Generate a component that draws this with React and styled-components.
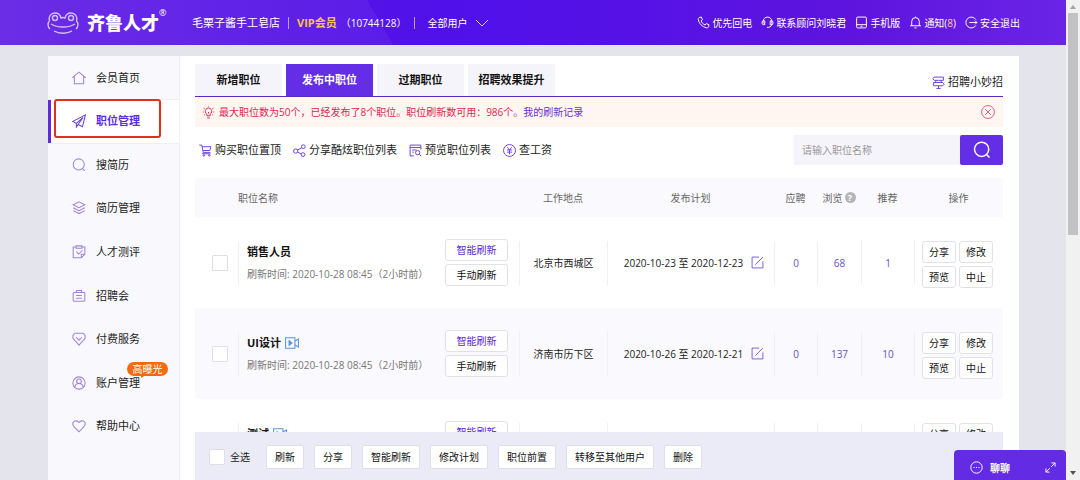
import styled, { createGlobalStyle, css } from 'styled-components';

const GlobalStyle = createGlobalStyle`
  * {
    box-sizing: border-box;
  }

  body {
    margin: 0;
    font-family: 'Open Sans', 'Noto Sans CJK SC', sans-serif;
    font-size: 10px;
    line-height: 16px;
    color: #222;
    background: #e4e5ec;
  }

  button, input, select {
    font-family: inherit;
    font-size: inherit;
    line-height: inherit;
  }

  a {
    color: inherit;
    text-decoration: none;
  }
`;

const icons = {
  phone: <path d="M5 2.5 8 2l2 5-2.5 2c1.200 3.500 4 6.300 7.500 7.500l2-2.500 5 2-.5 3.500c-.3 1.800-2 2.700-3.800 2.300C9.500 20 3.500 14 2.500 6.500 2.200 4.500 3.300 2.900 5 2.500Z" />,
  headset: (
    <>
      <path d="M4 14V10a8 8 0 0 1 16 0v4c0 4-2 6-6 7" />
      <path d="M7 9v7H4.500A2.500 2.500 0 0 1 2 13.500v-2A2.500 2.500 0 0 1 4.500 9ZM17 9v7h2.500a2.500 2.500 0 0 0 2.500-2.500v-2A2.500 2.500 0 0 0 19.500 9Z" />
      <path d="M11 21h3" />
    </>
  ),
  mobile: (
    <>
      <rect x="3" y="2" width="18" height="20" rx="2" />
      <path d="M3 16h18M10 19h4" />
    </>
  ),
  bell: <path d="M5 18V10a7 7 0 0 1 14 0v8M2 18h20M10 22h4M12 1v2" />,
  logout: (
    <>
      <path d="M20 6.500a10 10 0 1 0 0 11" />
      <path d="M8 12h14M18.500 8.500 22 12l-3.500 3.500" />
    </>
  ),
  home: <path d="M12 2 1.500 10.500H4V22h16V10.500h2.500Z" />,
  plane: (
    <>
      <path d="M23 1.500 1.500 12.500l6 3.500L19 6l-8.500 12 7.500 4Z" />
      <path d="M7.500 16v6.500l3-4.500" />
    </>
  ),
  search: (
    <>
      <circle cx="11.500" cy="11" r="9.500" />
      <path d="m18 18 4 4" />
    </>
  ),
  layers: (
    <>
      <path d="m12 1.500 10 5-10 5-10-5Z" />
      <path d="m2 11.500 10 5 10-5M2 16.500l10 5 10-5" />
    </>
  ),
  review: (
    <>
      <path d="M7 3.500H2V22h14l6-6V3.500h-5M22 16h-6v6" />
      <path d="M7 1.500h10v4H7ZM7.500 11.500l4 4L18 9" />
    </>
  ),
  fair: (
    <>
      <rect x="2" y="6" width="20" height="15" rx="1.500" />
      <path d="M7 6l1-3.500h8L17 6M7 11h10M7 16h10" />
    </>
  ),
  gem: (
    <>
      <path d="M5 2h14l3.500 4v5L12 22.500 1.500 11V6Z" />
      <path d="m7 9 5 5 5-5" />
    </>
  ),
  account: (
    <>
      <circle cx="12" cy="12" r="10.500" />
      <circle cx="12" cy="9" r="4" />
      <path d="M5 19c.5-4 3-6 7-6s6.500 2 7 6" />
    </>
  ),
  heart: <path d="M12 22 3 12.500C1 10 1 6.500 3 4.500s6-2 9 1.500c3-3.500 7-3.500 9-1.500s2 5.500 0 8Z" />,
  signpost: <path d="M4 2h17v6H4L1.500 5ZM7 8v4M17 8v4M3 12h17l2.500 3L20 18H3ZM12 18v5M8 23h8" />,
  bulb: (
    <>
      <path d="M9 18v-3a6 6 0 1 1 6 0v3ZM9.500 22h5M12 14v-3" />
      <path d="M12 1v1M3 4l2 1.500M21 4l-2 1.500M1.500 11H3M21 11h1.500M3.500 17l1.500-1M20.500 17 19 16" />
    </>
  ),
  close: (
    <>
      <circle cx="12" cy="12" r="11" />
      <path d="m7 7 10 10M17 7 7 17" />
    </>
  ),
  cart: (
    <>
      <path d="M.5 2H5l3 13.500h13M5.500 5H22l-2 7H7.500M8 15.500 6.500 18H21" />
      <circle cx="9" cy="21" r="1.500" />
      <circle cx="19" cy="21" r="1.500" />
    </>
  ),
  share: (
    <>
      <circle cx="5" cy="13" r="4" />
      <circle cx="19" cy="5" r="3.500" />
      <circle cx="18.500" cy="19.500" r="3.500" />
      <path d="m8.500 11 7.500-4M8.500 15l7 3.500" />
    </>
  ),
  preview: (
    <>
      <path d="M9 22H2V2h20v8M2 6.500h20M6 11h8M6 15h3" />
      <circle cx="16" cy="16" r="4" />
      <path d="m19 19 3.500 3.500" />
    </>
  ),
  yen: (
    <>
      <circle cx="12" cy="12" r="11" />
      <path d="m8 6 4 5 4-5M12 11v8M7.500 11h9M7.500 15h9" />
    </>
  ),
  edit: <path d="M15 2H2v20h20V10M22 2 8 16" />,
  video: (
    <>
      <path d="M1 3h16v18H1ZM17 9l6-4v14l-6-4" />
      <path d="m7 8 5 4-5 4Z" fill="currentColor" />
    </>
  ),
  chat: (
    <>
      <circle cx="12" cy="12" r="10.500" />
      <path d="M6.500 12h2M11 12h2M15.500 12h2" />
    </>
  ),
  expand: <path d="M14 2h8v8M22 2l-8.500 8.500M10 22H2v-8M2 22l8.500-8.500" />,
};

const Svg = styled.svg`
  flex: none;
  display: block;
  width: ${({ $size }) => $size}px;
  height: ${({ $size }) => $size}px;
  fill: none;
  stroke: currentColor;
  stroke-width: ${({ $weight }) => $weight};
  color: ${({ $color }) => $color};
`;

const Icon = ({ name, size = 13, color = 'currentColor', weight = 1.8 }) => (
  <Svg viewBox="0 0 24 24" $size={size} $color={color} $weight={weight} aria-hidden="true">
    {icons[name]}
  </Svg>
);

const menu = [
  { icon: 'home', label: '会员首页' },
  { icon: 'plane', label: '职位管理', active: true },
  { icon: 'search', label: '搜简历' },
  { icon: 'layers', label: '简历管理' },
  { icon: 'review', label: '人才测评' },
  { icon: 'fair', label: '招聘会' },
  { icon: 'gem', label: '付费服务' },
  { icon: 'account', label: '账户管理', badge: '高曝光' },
  { icon: 'heart', label: '帮助中心' },
];

const tabs = ['新增职位', '发布中职位', '过期职位', '招聘效果提升'];

const tools = [
  { icon: 'cart', label: '购买职位置顶' },
  { icon: 'share', label: '分享酷炫职位列表' },
  { icon: 'preview', label: '预览职位列表' },
  { icon: 'yen', label: '查工资' },
];

const jobs = [
  {
    title: '销售人员',
    refreshed: '2020-10-28 08:45（2小时前）',
    place: '北京市西城区',
    plan: '2020-10-23 至 2020-12-23',
    stats: [0, 68, 1],
    refresh: ['智能刷新', '手动刷新'],
    actions: ['分享', '修改', '预览', '中止'],
  },
  {
    title: 'UI设计',
    video: true,
    refreshed: '2020-10-28 08:45（2小时前）',
    place: '济南市历下区',
    plan: '2020-10-26 至 2020-12-21',
    stats: [0, 137, 10],
    refresh: ['智能刷新', '手动刷新'],
    actions: ['分享', '修改', '预览', '中止'],
  },
  {
    title: '测试',
    video: true,
    stats: [null, null, null],
    refresh: ['智能刷新'],
    actions: ['分享', '修改'],
  },
];

const bulkActions = ['刷新', '分享', '智能刷新', '修改计划', '职位前置', '转移至其他用户', '删除'];

const TopBar = () => (
  <Header>
    <Logo href="#">
      <Frog viewBox="0 0 32 22" aria-hidden="true">
        <path d="M2.500 9C1 4.500 4 1 8 1s5.500 2.500 6 5c1-.5 3-.5 4 0 .5-2.500 2-5 6-5s7 3.500 5.500 8" />
        <circle cx="8" cy="6" r="2.500" />
        <circle cx="24" cy="6" r="2.500" />
        <path d="M2.500 9C.5 11 .5 15 3 17M29.500 9c2 2 2 6-.5 8" />
        <path d="M4 12c6 4 18 4 24 0M7 19c5 3 13 3 18 0" />
      </Frog>
      <LogoText>齐鲁人才</LogoText>
      <Reg>®</Reg>
    </Logo>
    <Company>
      <CompanyName>毛栗子酱手工皂店</CompanyName>
      <Divider />
      <Vip>VIP会员</Vip>
      <span>（10744128）</span>
      <Divider />
      <UserPicker>
        <UserSelect aria-label="用户">
          <option>全部用户</option>
        </UserSelect>
        <Chevron viewBox="0 0 14 8" aria-hidden="true">
          <path d="m1 1 6 6 6-6" />
        </Chevron>
      </UserPicker>
    </Company>
    <TopLinks>
      <TopLink href="#"><Icon name="phone" />优先回电</TopLink>
      <TopLink href="#"><Icon name="headset" />联系顾问刘晓君</TopLink>
      <TopLink href="#"><Icon name="mobile" />手机版</TopLink>
      <TopLink href="#"><Icon name="bell" /><span>通知(<Count>8</Count>)</span></TopLink>
      <TopLink href="#"><Icon name="logout" />安全退出</TopLink>
    </TopLinks>
  </Header>
);

const Sidebar = () => (
  <Side>
    <Menu>
      {menu.map(({ icon, label, active, badge }) => (
        <MenuItem key={label}>
          <MenuLink href="#" $active={active}>
            <Icon name={icon} size={14} color={active ? '#6b45d8' : '#9a86dc'} />
            <span>{label}</span>
          </MenuLink>
          {active && <Highlight />}
          {badge && <MenuBadge>{badge}</MenuBadge>}
        </MenuItem>
      ))}
    </Menu>
  </Side>
);

const JobRow = ({ job }) => (
  <Row>
    <td>
      <CheckCell><Check type="checkbox" aria-label={job.title} /></CheckCell>
    </td>
    <td>
      <NameCell>
        <JobInfo>
          <JobTitle>
            {job.title}
            {job.video && <Icon name="video" size={14} color="#5a94e0" />}
          </JobTitle>
          {job.refreshed && <Muted>刷新时间: {job.refreshed}</Muted>}
        </JobInfo>
        <RefreshButtons>
          {job.refresh.map((label, i) => (
            <SmallButton key={label} $accent={i === 0}>{label}</SmallButton>
          ))}
        </RefreshButtons>
      </NameCell>
    </td>
    <td><Cell>{job.place}</Cell></td>
    <td>
      <PlanCell>
        {job.plan && (
          <>
            <span>{job.plan}</span>
            <EditButton aria-label="修改计划"><Icon name="edit" /></EditButton>
          </>
        )}
      </PlanCell>
    </td>
    {job.stats.map((value, i) => (
      <td key={i}>
        <Cell>{value !== null && <Num href="#">{value}</Num>}</Cell>
      </td>
    ))}
    <td>
      <ActionCell>
        {job.actions.map((label) => <SmallButton key={label}>{label}</SmallButton>)}
      </ActionCell>
    </td>
  </Row>
);

const App = () => (
  <>
    <GlobalStyle />
    <Screen>
      <Page>
        <TopBar />
        <Panel>
          <Sidebar />
          <Main>
            <TabBar>
              {tabs.map((tab, i) => (
                <Tab key={tab} $active={i === 1}>{tab}</Tab>
              ))}
              <Tips href="#"><Icon name="signpost" color="#6b45d8" />招聘小妙招</Tips>
            </TabBar>
            <Notice>
              <Icon name="bulb" />
              <p>
                最大职位数为50个，已经发布了8个职位。职位刷新数可用：986个。
                <NoticeLink href="#">我的刷新记录</NoticeLink>
              </p>
              <CloseButton aria-label="关闭"><Icon name="close" size={14} weight={1.5} /></CloseButton>
            </Notice>
            <Toolbar>
              {tools.map(({ icon, label }) => (
                <Tool key={label} href="#"><Icon name={icon} color="#6b45d8" />{label}</Tool>
              ))}
              <Search>
                <SearchInput placeholder="请输入职位名称" aria-label="职位名称" />
                <SearchButton aria-label="搜索"><Icon name="search" size={18} weight={2} /></SearchButton>
              </Search>
            </Toolbar>
            <TableArea>
              <Table>
                <colgroup>
                  <Col $w={43} />
                  <col />
                  <Col $w={88} />
                  <Col $w={167} />
                  <Col $w={43} />
                  <Col $w={44} />
                  <Col $w={53} />
                  <Col $w={89} />
                </colgroup>
                <thead>
                  <tr>
                    <Th />
                    <Th $left>职位名称</Th>
                    <Th>工作地点</Th>
                    <Th>发布计划</Th>
                    <Th>应聘</Th>
                    <Th><Views>浏览<Help>?</Help></Views></Th>
                    <Th>推荐</Th>
                    <Th>操作</Th>
                  </tr>
                </thead>
                <tbody>
                  {jobs.map((job) => <JobRow key={job.title} job={job} />)}
                </tbody>
              </Table>
            </TableArea>
            <BulkBar>
              <SelectAll><Check type="checkbox" />全选</SelectAll>
              {bulkActions.map((label) => <BulkButton key={label}>{label}</BulkButton>)}
            </BulkBar>
          </Main>
        </Panel>
        <Chat>
          <Icon name="chat" />
          <ChatLabel>聊聊</ChatLabel>
          <Icon name="expand" size={11} weight={2} />
        </Chat>
      </Page>
      <Scrollbar>
        <Arrow viewBox="0 0 6 4"><path d="M3 0 6 4H0Z" /></Arrow>
        <Thumb />
        <Arrow viewBox="0 0 6 4" $dark><path d="M3 4 6 0H0Z" /></Arrow>
      </Scrollbar>
    </Screen>
  </>
);

const Screen = styled.div`
  display: flex;
  height: 100vh;
  overflow: hidden;
`;

const Page = styled.div`
  position: relative;
  flex: 1;
  min-width: 0;
  display: flex;
  flex-direction: column;
`;

const Header = styled.header`
  flex: none;
  display: flex;
  align-items: center;
  height: 45px;
  padding: 0 46px 0 47px;
  color: #fff;
  background:
    linear-gradient(60deg, rgba(255, 255, 255, 0.05) 0 36%, transparent 36%),
    linear-gradient(90deg, #6422e6 0%, #5614e6 28%, #4f10ea 42%, #5612e6 60%, #5e14de 80%, #6a24e6 100%);
`;

const Logo = styled.a`
  display: flex;
  align-items: center;
  width: 145px;
`;

const Frog = styled.svg`
  width: 32px;
  height: 22px;
  margin-right: 8px;
  fill: none;
  stroke: #d3c0fa;
  stroke-width: 1.4;
`;

const LogoText = styled.strong`
  font-size: 18px;
  font-weight: 900;
  line-height: 24px;
`;

const Reg = styled.sup`
  align-self: flex-start;
  font-size: 9px;
  line-height: 4px;
`;

const Company = styled.div`
  display: flex;
  align-items: center;
  white-space: nowrap;
`;

const CompanyName = styled.span`
  font-size: 11px;
`;

const Divider = styled.i`
  width: 1px;
  height: 12px;
  margin: 0 8px;
  background: #b79df5;
`;

const Vip = styled.strong`
  margin-right: 4px;
  font-size: 11px;
  color: #f9c257;
`;

const UserPicker = styled.div`
  display: flex;
  align-items: center;
  margin-left: 4px;
`;

const UserSelect = styled.select`
  appearance: none;
  width: 48px;
  padding: 0;
  border: 0;
  color: #fff;
  background: none;
`;

const Chevron = styled.svg`
  width: 14px;
  height: 8px;
  fill: none;
  stroke: #d5c6fb;
  pointer-events: none;
`;

const TopLinks = styled.nav`
  display: flex;
  gap: 9px;
  margin-left: auto;
  white-space: nowrap;
`;

const TopLink = styled.a`
  display: flex;
  align-items: center;
  gap: 2px;
`;

const Count = styled.span`
  color: #ffc98a;
`;

const Panel = styled.div`
  flex: 1;
  min-height: 0;
  display: flex;
  margin: 11px 47px 0 48px;
  background: #fff;
`;

const Side = styled.aside`
  flex: none;
  width: 132px;
  background: #f9f9fd;
  border-right: 1px solid #f1f0f5;
`;

const Menu = styled.ul`
  display: grid;
  grid-template-rows: repeat(9, 1fr);
  height: 392px;
  margin: 0;
  padding: 0;
  list-style: none;
`;

const MenuItem = styled.li`
  position: relative;
`;

const MenuLink = styled.a`
  display: flex;
  align-items: center;
  gap: 10px;
  height: 100%;
  padding-left: 24px;
  font-size: 11px;

  ${({ $active }) => $active && css`
    padding-left: 21px;
    font-weight: 700;
    color: #5b2be0;
    background: #fff;
    border-left: 3px solid #6029e0;
    box-shadow: 0 1px 0 #efeef4, 0 -1px 0 #efeef4;
  `}
`;

const Highlight = styled.div`
  position: absolute;
  top: -1px;
  left: 6px;
  width: 107px;
  height: 39px;
  border: 2px solid #e0301e;
  border-radius: 3px;
`;

const MenuBadge = styled.span`
  position: absolute;
  top: 1px;
  left: 79px;
  width: 41px;
  height: 14px;
  border-radius: 7px;
  line-height: 14px;
  text-align: center;
  color: #fff;
  background: #f56a0c;

  &::after {
    content: '';
    position: absolute;
    top: 13px;
    left: 14px;
    border-top: 3px solid #f56a0c;
    border-right: 5px solid transparent;
  }
`;

const Main = styled.main`
  flex: 1;
  min-width: 0;
  display: flex;
  flex-direction: column;
  padding: 8px 16px 0 15px;
`;

const TabBar = styled.div`
  flex: none;
  display: flex;
  gap: 4px;
  height: 33px;
  border-bottom: 1px solid #5b2bc4;
`;

const Tab = styled.button`
  width: 87px;
  padding: 0;
  border: 0;
  font-size: 11px;
  font-weight: 700;
  color: ${({ $active }) => ($active ? '#fff' : '#111')};
  background: ${({ $active }) => ($active ? '#642ee6' : '#f5f4fa')};
`;

const Tips = styled.a`
  display: flex;
  align-items: center;
  gap: 3px;
  margin-left: auto;
  padding-top: 4px;
  font-size: 11px;
`;

const Notice = styled.div`
  flex: none;
  display: flex;
  align-items: center;
  gap: 4px;
  height: 30px;
  padding: 0 8px 0 7px;
  color: #e0264f;
  background: #fff6f1;

  p {
    margin: 0;
  }
`;

const NoticeLink = styled.a`
  color: #6a2fd6;
`;

const CloseButton = styled.button`
  margin-left: auto;
  padding: 0;
  border: 0;
  color: #d8486a;
  background: none;
`;

const Toolbar = styled.div`
  flex: none;
  display: flex;
  align-items: center;
  gap: 12px;
  height: 30px;
  margin: 8px 0 13px;
  padding-left: 4px;
`;

const Tool = styled.a`
  display: flex;
  align-items: center;
  gap: 3px;
  font-size: 11px;
  white-space: nowrap;
`;

const Search = styled.div`
  display: flex;
  height: 100%;
  margin-left: auto;
`;

const SearchInput = styled.input`
  width: 166px;
  padding: 0 8px;
  border: 0;
  background: #f5f4fa;

  &::placeholder {
    color: #999;
  }
`;

const SearchButton = styled.button`
  display: grid;
  place-items: center;
  width: 43px;
  padding: 0;
  border: 0;
  border-radius: 2px;
  color: #fff;
  background: #642ee6;
`;

const TableArea = styled.div`
  flex: 1;
  min-height: 0;
  overflow: hidden;
`;

const Table = styled.table`
  width: 100%;
  table-layout: fixed;
  border-collapse: collapse;

  td {
    padding: 0;
  }
`;

const Col = styled.col`
  width: ${({ $w }) => $w}px;
`;

const Th = styled.th`
  height: 39px;
  padding: 0;
  font-weight: 400;
  text-align: ${({ $left }) => ($left ? 'left' : 'center')};
  color: #666;
  background: #faf9fd;
`;

const Views = styled.span`
  display: flex;
  align-items: center;
  justify-content: center;
  gap: 2px;
`;

const Help = styled.span`
  width: 11px;
  height: 11px;
  border-radius: 50%;
  font-size: 9px;
  font-weight: 700;
  line-height: 11px;
  color: #fff;
  background: #b5b5b8;
`;

const Row = styled.tr`
  height: 91px;

  &:nth-child(even) {
    background: #faf9fd;
  }
`;

const CheckCell = styled.div`
  display: flex;
  padding-left: 17px;
`;

const Check = styled.input`
  appearance: none;
  width: 16px;
  height: 16px;
  margin: 0;
  border: 1px solid #e0dfe6;
  border-radius: 1px;
  background: #fff;
`;

const Cell = styled.div`
  display: flex;
  align-items: center;
  justify-content: center;
  gap: 8px;
  height: 44px;
  border-left: 1px solid #f0eff5;
  white-space: nowrap;
`;

const NameCell = styled(Cell)`
  justify-content: space-between;
  padding: 0 11px 0 8px;
`;

const PlanCell = styled(Cell)`
  padding-left: 6px;
`;

const ActionCell = styled(Cell)`
  display: grid;
  grid-template: 22px 22px / 34px 34px;
  gap: 3px;
  align-content: start;
  justify-content: start;
  padding-left: 7px;
`;

const EditButton = styled.button`
  padding: 0;
  border: 0;
  color: #7a62d6;
  background: none;
`;

const JobInfo = styled.div`
  display: grid;
  grid-template-rows: 16px 16px;
  gap: 6px;
`;

const JobTitle = styled.div`
  display: flex;
  align-items: center;
  gap: 4px;
  font-size: 11px;
  font-weight: 700;
  color: #111;
`;

const Muted = styled.div`
  color: #777;
`;

const SmallButton = styled.button`
  height: 22px;
  padding: 0;
  border: 1px solid #e2e1e8;
  border-radius: 3px;
  color: ${({ $accent }) => ($accent ? '#5b1fd8' : '#111')};
  background: #fff;
`;

const RefreshButtons = styled.div`
  display: grid;
  grid-template-rows: 22px 22px;
  gap: 3px;
  width: 63px;
`;

const Num = styled.a`
  color: #6a4fd0;
`;

const BulkBar = styled.div`
  flex: none;
  display: flex;
  align-items: center;
  gap: 10px;
  height: 48px;
  padding: 2px 14px 0;
  background: #ebebf7;
`;

const SelectAll = styled.label`
  display: flex;
  align-items: center;
  gap: 5px;
  margin-right: 6px;
`;

const BulkButton = styled.button`
  height: 24px;
  padding: 0 8px;
  border: 1px solid #dfdeea;
  border-radius: 2px;
  color: #111;
  background: #fff;
`;

const Chat = styled.button`
  position: absolute;
  right: 0;
  bottom: 0;
  display: flex;
  align-items: center;
  width: 112px;
  height: 30px;
  padding: 5px 10px 0 16px;
  border: 0;
  border-radius: 4px 4px 0 0;
  color: #fff;
  background: #642be4;
`;

const ChatLabel = styled.strong`
  margin: 0 auto 0 7px;
`;

const Scrollbar = styled.div`
  flex: none;
  display: flex;
  flex-direction: column;
  align-items: center;
  width: 14px;
  padding: 5px 0;
  background: #f1f1f1;
`;

const Thumb = styled.div`
  width: 10px;
  height: 222px;
  margin: 4px 0 auto;
  background: #c2c1c3;
`;

const Arrow = styled.svg`
  width: 6px;
  height: 4px;
  fill: ${({ $dark }) => ($dark ? '#505050' : '#a3a3a3')};
`;

export default App;
